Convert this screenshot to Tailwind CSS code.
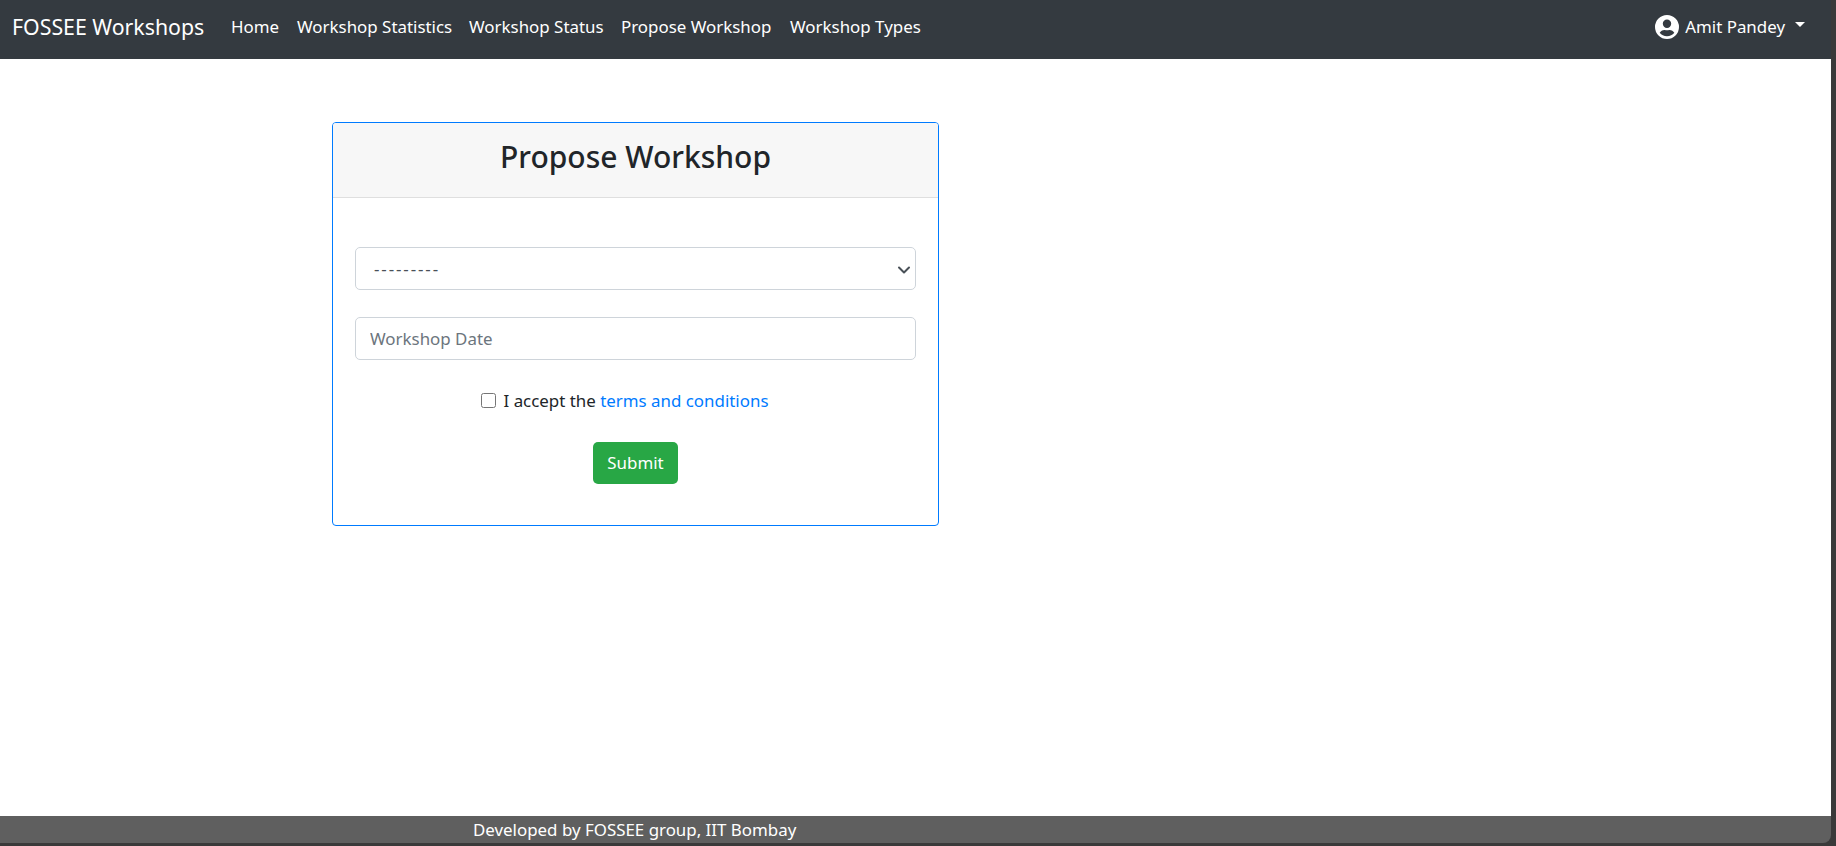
<!DOCTYPE html>
<html lang="en">
<head>
  <meta charset="UTF-8" />
  <title>Propose Workshop</title>
  <script src="https://cdn.jsdelivr.net/npm/@tailwindcss/browser@4"></script>
</head>
<body class="bg-[#3a3a3a] font-['Noto_Sans',sans-serif] text-[#212529]">
  <div class="h-[846px] pr-[5px] pb-[3px] flex flex-col overflow-hidden">
    <!-- Navbar -->
    <nav class="h-[59px] bg-[#343a40] flex items-center pl-3 pb-[5px] pr-[26px] text-white text-[16.9px] shrink-0">
      <a href="#" class="text-[21.3px] w-[219px] shrink-0">FOSSEE Workshops</a>
      <div class="flex items-center">
        <a href="#" class="w-[66px]">Home</a>
        <a href="#" class="w-[172px]">Workshop Statistics</a>
        <a href="#" class="w-[152px]">Workshop Status</a>
        <a href="#" class="w-[169px]">Propose Workshop</a>
        <a href="#">Workshop Types</a>
      </div>
      <a href="#" class="ml-auto flex items-center">
        <svg class="w-[24px] h-[24px] mr-[6px]" viewBox="0 0 24 24" fill="#fff"><path d="M12 0a12 12 0 1 0 0 24 12 12 0 0 0 0-24zm0 4.6a4.2 4.2 0 1 1 0 8.4 4.2 4.2 0 0 1 0-8.4zm0 16.6c-3 0-5.600-1.400-7.300-3.500.9-1.700 2.700-2.800 4.800-2.800.1 0 .3 0 .4.100.6.200 1.300.300 2.100.300s1.500-.1 2.100-.3c.1 0 .3-.1.400-.1 2.100 0 3.900 1.100 4.800 2.800-1.700 2.100-4.300 3.500-7.300 3.500z"/></svg>
        <span>Amit Pandey</span>
        <span class="ml-[10px] mb-[5px] border-t-[5px] border-x-[5px] border-t-white border-x-transparent"></span>
      </a>
    </nav>

    <!-- Form -->
    <main class="flex-1 bg-white pt-[63px] pl-[332px]">
      <div class="w-[607px] h-[404px] border border-[#007bff] rounded-[4px] overflow-hidden">
        <div class="h-[75px] bg-[#f7f7f7] border-b border-[#dfdfdf] flex items-center justify-center pb-[7px]">
          <h3 class="text-[30px] font-medium leading-none">Propose Workshop</h3>
        </div>
        <form class="px-[22px] pt-[49px] flex flex-col items-center">
          <div class="relative w-full">
            <select class="w-full h-[43px] appearance-none bg-white border border-[#ced4da] rounded-[5px] pl-[18px] text-[16.9px] tracking-[1.9px] text-[#495057]">
              <option>---------</option>
            </select>
            <svg class="absolute right-[4px] top-[15px] w-[16px] h-[16px]" viewBox="0 0 16 16" fill="none" stroke="#495057" stroke-width="2" stroke-linecap="round" stroke-linejoin="round"><path d="M3 5.500l5 5 5-5"/></svg>
          </div>
          <input type="text" placeholder="Workshop Date" class="w-full h-[43px] mt-[27px] border border-[#ced4da] rounded-[5px] px-[14px] text-[16.9px] placeholder:text-[#6c757d]" />
          <label class="mt-[32px] mr-[22px] flex items-center text-[16.9px] text-[#212529] h-[18px]">
            <input type="checkbox" class="w-[15px] h-[15px] mr-[8px] mb-[2px]" />
            <span>I accept the <a href="#" class="text-[#007bff]">terms and conditions</a></span>
          </label>
          <button type="button" class="mt-[32px] w-[85px] h-[42px] bg-[#28a745] text-white text-[16.9px] rounded-[5px]">Submit</button>
        </form>
      </div>
    </main>

    <!-- Footer -->
    <footer class="h-[27px] bg-[#5f5f5f] text-white text-[16.9px] pl-[473px] flex items-center rounded-br-[8px] shrink-0">
      Developed by FOSSEE group, IIT Bombay
    </footer>
  </div>
</body>
</html>
